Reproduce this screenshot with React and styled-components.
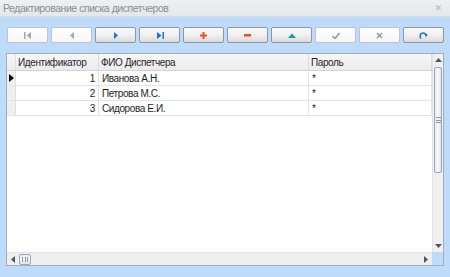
import React from 'react';
import styled, { createGlobalStyle } from 'styled-components';

const GlobalStyle = createGlobalStyle`
  html, body {
    margin: 0;
    padding: 0;
    background: #bfdbfb;
  }
  body {
    font-family: "Liberation Sans", Arial, sans-serif;
  }
`;

const rows = [
  { id: 1, name: 'Иванова А.Н.', pass: '*' },
  { id: 2, name: 'Петрова М.С.', pass: '*' },
  { id: 3, name: 'Сидорова Е.И.', pass: '*' },
];

const Icon = ({ kind }) => {
  switch (kind) {
    case 'first':
      return (
        <svg width="8" height="7" viewBox="0 0 8 7">
          <rect x="0" y="0" width="1.5" height="7" fill="#a6a6a6" />
          <path d="M7 0 L2.5 3.5 L7 7 Z" fill="#a6a6a6" />
        </svg>
      );
    case 'prev':
      return (
        <svg width="6" height="7" viewBox="0 0 6 7">
          <path d="M5 0 L1 3.5 L5 7 Z" fill="#a6a6a6" />
        </svg>
      );
    case 'next':
      return (
        <svg width="6" height="7" viewBox="0 0 6 7">
          <path d="M1 0 L5 3.5 L1 7 Z" fill="#1f73d1" />
        </svg>
      );
    case 'last':
      return (
        <svg width="8" height="7" viewBox="0 0 8 7">
          <path d="M1 0 L5.5 3.5 L1 7 Z" fill="#1f73d1" />
          <rect x="6.5" y="0" width="1.5" height="7" fill="#1f73d1" />
        </svg>
      );
    case 'add':
      return (
        <svg width="7" height="7" viewBox="0 0 7 7">
          <path d="M2.5 0 H4.5 V2.5 H7 V4.5 H4.5 V7 H2.5 V4.5 H0 V2.5 H2.5 Z" fill="#e5501e" />
        </svg>
      );
    case 'del':
      return (
        <svg width="7" height="3" viewBox="0 0 7 3">
          <rect x="0" y="0" width="7" height="2.5" fill="#e5501e" />
        </svg>
      );
    case 'up':
      return (
        <svg width="8" height="5" viewBox="0 0 8 5">
          <path d="M0 5 L4 0.5 L8 5 Z" fill="#1a98b0" />
        </svg>
      );
    case 'ok':
      return (
        <svg width="8" height="7" viewBox="0 0 8 7">
          <path d="M0.5 4 L3 6.5 L7.5 1" stroke="#9a9a9a" strokeWidth="1.6" fill="none" />
        </svg>
      );
    case 'cancel':
      return (
        <svg width="7" height="7" viewBox="0 0 7 7">
          <path d="M1 1 L6 6 M6 1 L1 6" stroke="#9a9a9a" strokeWidth="1.6" fill="none" />
        </svg>
      );
    case 'refresh':
      return (
        <svg width="9" height="9" viewBox="0 0 9 9">
          <path d="M2 7.5 A3.2 3.2 0 1 1 7.3 4.2" stroke="#1f73d1" strokeWidth="1.6" fill="none" />
          <path d="M5.3 3.3 L8.8 3.3 L7.2 6.2 Z" fill="#1f73d1" />
        </svg>
      );
    default:
      return null;
  }
};

const buttons = [
  { kind: 'first', enabled: false },
  { kind: 'prev', enabled: false },
  { kind: 'next', enabled: true },
  { kind: 'last', enabled: true },
  { kind: 'add', enabled: true },
  { kind: 'del', enabled: true },
  { kind: 'up', enabled: true },
  { kind: 'ok', enabled: false },
  { kind: 'cancel', enabled: false },
  { kind: 'refresh', enabled: true },
];

const App = () => {
  return (
    <>
      <GlobalStyle />
      <Window>
        <TitleBar>
          <Title>Редактирование списка диспетчеров</Title>
          <CloseBtn>✕</CloseBtn>
        </TitleBar>
        <Body>
          <Toolbar>
            {buttons.map((b) => (
              <ToolButton key={b.kind} $enabled={b.enabled}>
                <Icon kind={b.kind} />
              </ToolButton>
            ))}
          </Toolbar>
          <Grid>
            <DataArea>
              <HeaderRow>
                <Indicator $header />
                <HeadCell $w={83}>Идентификатор</HeadCell>
                <HeadCell $w={210}>ФИО Диспетчера</HeadCell>
                <HeadCell $grow>Пароль</HeadCell>
              </HeaderRow>
              {rows.map((r, i) => (
                <Row key={r.id}>
                  <Indicator>
                    {i === 0 && (
                      <svg width="5" height="8" viewBox="0 0 5 8">
                        <path d="M0 0 L5 4 L0 8 Z" fill="#000" />
                      </svg>
                    )}
                  </Indicator>
                  <Cell $w={83} $right>{r.id}</Cell>
                  <Cell $w={210}>{r.name}</Cell>
                  <Cell $grow>{r.pass}</Cell>
                </Row>
              ))}
            </DataArea>
            <VScroll>
              <ArrowBox>
                <svg width="7" height="4" viewBox="0 0 7 4">
                  <path d="M0 4 L3.5 0 L7 4 Z" fill="#4a5566" />
                </svg>
              </ArrowBox>
              <VTrack>
                <VThumb>
                  <Grip $vertical />
                </VThumb>
              </VTrack>
              <ArrowBox>
                <svg width="7" height="4" viewBox="0 0 7 4">
                  <path d="M0 0 L7 0 L3.5 4 Z" fill="#4a5566" />
                </svg>
              </ArrowBox>
            </VScroll>
            <HScroll>
              <HArrowBox>
                <svg width="4" height="7" viewBox="0 0 4 7">
                  <path d="M4 0 L0 3.5 L4 7 Z" fill="#4a5566" />
                </svg>
              </HArrowBox>
              <HThumb>
                <Grip />
              </HThumb>
              <HTrack />
              <HArrowBox>
                <svg width="4" height="7" viewBox="0 0 4 7">
                  <path d="M0 0 L4 3.5 L0 7 Z" fill="#4a5566" />
                </svg>
              </HArrowBox>
            </HScroll>
            <Corner />
          </Grid>
        </Body>
      </Window>
    </>
  );
};

export default App;

const Window = styled.div`
  width: 450px;
  height: 277px;
  display: flex;
  flex-direction: column;
  overflow: hidden;
`;

const TitleBar = styled.div`
  height: 17px;
  flex: 0 0 17px;
  display: flex;
  align-items: center;
  justify-content: space-between;
  padding: 0 8px 0 3px;
  background: linear-gradient(#eef0f3, #e4e7eb);
  border-bottom: 1px solid #d6dce4;
  box-sizing: border-box;
`;

const Title = styled.span`
  font-size: 10.5px;
  letter-spacing: -0.45px;
  color: #8e8e8e;
`;

const CloseBtn = styled.span`
  font-size: 9px;
  color: #b4b4b4;
  font-family: "DejaVu Sans", sans-serif;
`;

const Body = styled.div`
  flex: 1;
  display: flex;
  flex-direction: column;
  background: #bfdbfb;
  padding: 10px 6px 11px 6px;
  box-sizing: border-box;
`;

const Toolbar = styled.div`
  display: flex;
  gap: 3px;
  padding-left: 1px;
`;

const ToolButton = styled.div`
  width: 41px;
  height: 16px;
  box-sizing: border-box;
  display: flex;
  align-items: center;
  justify-content: center;
  border-radius: 2px;
  border: 1px solid ${(p) => (p.$enabled ? '#8f96a0' : '#bcc4ce')};
  background: ${(p) =>
    p.$enabled
      ? 'linear-gradient(#fbfbfb, #f0f0f0 50%, #dadada)'
      : 'linear-gradient(#ffffff, #f6f6f6)'};
`;

const Grid = styled.div`
  margin-top: 10px;
  flex: 1;
  display: grid;
  grid-template-columns: 1fr 11px;
  grid-template-rows: 1fr 13px;
  border: 1px solid #a5adb8;
  background: #fff;
  min-height: 0;
`;

const DataArea = styled.div`
  display: flex;
  flex-direction: column;
  overflow: hidden;
  font-size: 10px;
  letter-spacing: -0.4px;
  color: #1e1e1e;
`;

const HeaderRow = styled.div`
  display: flex;
  height: 16px;
  flex: 0 0 16px;
  background: linear-gradient(#f7f7f7, #ebebeb);
  border-bottom: 1px solid #d4d4d4;
`;

const Row = styled.div`
  display: flex;
  height: 15px;
  flex: 0 0 15px;
  border-bottom: 1px solid #e4e4e4;
  box-sizing: border-box;
`;

const Indicator = styled.div`
  width: 9px;
  flex: 0 0 9px;
  background: ${(p) => (p.$header ? 'transparent' : '#efefef')};
  border-right: 1px solid #e0e0e0;
  box-sizing: border-box;
  display: flex;
  align-items: center;
  padding-left: 2px;
`;

const HeadCell = styled.div`
  width: ${(p) => (p.$w ? `${p.$w}px` : 'auto')};
  flex: ${(p) => (p.$grow ? '1' : `0 0 ${p.$w}px`)};
  box-sizing: border-box;
  padding: 0 2px;
  display: flex;
  align-items: center;
  border-right: 1px solid #dcdcdc;
  color: #2a2230;
`;

const Cell = styled.div`
  width: ${(p) => (p.$w ? `${p.$w}px` : 'auto')};
  flex: ${(p) => (p.$grow ? '1' : `0 0 ${p.$w}px`)};
  box-sizing: border-box;
  padding: 0 3px;
  display: flex;
  align-items: center;
  justify-content: ${(p) => (p.$right ? 'flex-end' : 'flex-start')};
  border-right: 1px solid #e4e4e4;
`;

const VScroll = styled.div`
  display: flex;
  flex-direction: column;
  background: #f0f0f0;
  border-left: 1px solid #e2e2e2;
`;

const ArrowBox = styled.div`
  height: 12px;
  flex: 0 0 12px;
  display: flex;
  align-items: center;
  justify-content: center;
`;

const VTrack = styled.div`
  flex: 1;
  padding-top: 1px;
`;

const VThumb = styled.div`
  height: 104px;
  margin: 0 1px;
  border: 1px solid #9ba9bc;
  border-radius: 2px;
  background: linear-gradient(90deg, #e6eaf0, #f8f9fb 50%, #dde3ea);
  display: flex;
  align-items: center;
  justify-content: center;
`;

const Grip = styled.div`
  width: ${(p) => (p.$vertical ? '5px' : '4px')};
  height: ${(p) => (p.$vertical ? '4px' : '5px')};
  border-style: solid;
  border-color: #8a96a6;
  border-width: ${(p) => (p.$vertical ? '1px 0' : '0 1px')};
  position: relative;
  &::after {
    content: '';
    position: absolute;
    background: #8a96a6;
    ${(p) =>
      p.$vertical
        ? 'left: 0; right: 0; top: 1.5px; height: 1px;'
        : 'top: 0; bottom: 0; left: 1.5px; width: 1px;'}
  }
`;

const HScroll = styled.div`
  display: flex;
  align-items: center;
  background: #efefef;
  border-top: 1px solid #e2e2e2;
`;

const HArrowBox = styled.div`
  width: 12px;
  flex: 0 0 12px;
  display: flex;
  align-items: center;
  justify-content: center;
`;

const HThumb = styled.div`
  width: 10px;
  height: 9px;
  border: 1px solid #9ba9bc;
  border-radius: 2px;
  background: linear-gradient(#e6eaf0, #f8f9fb 50%, #dde3ea);
  display: flex;
  align-items: center;
  justify-content: center;
`;

const HTrack = styled.div`
  flex: 1;
`;

const Corner = styled.div`
  background: #bfdbfb;
`;
